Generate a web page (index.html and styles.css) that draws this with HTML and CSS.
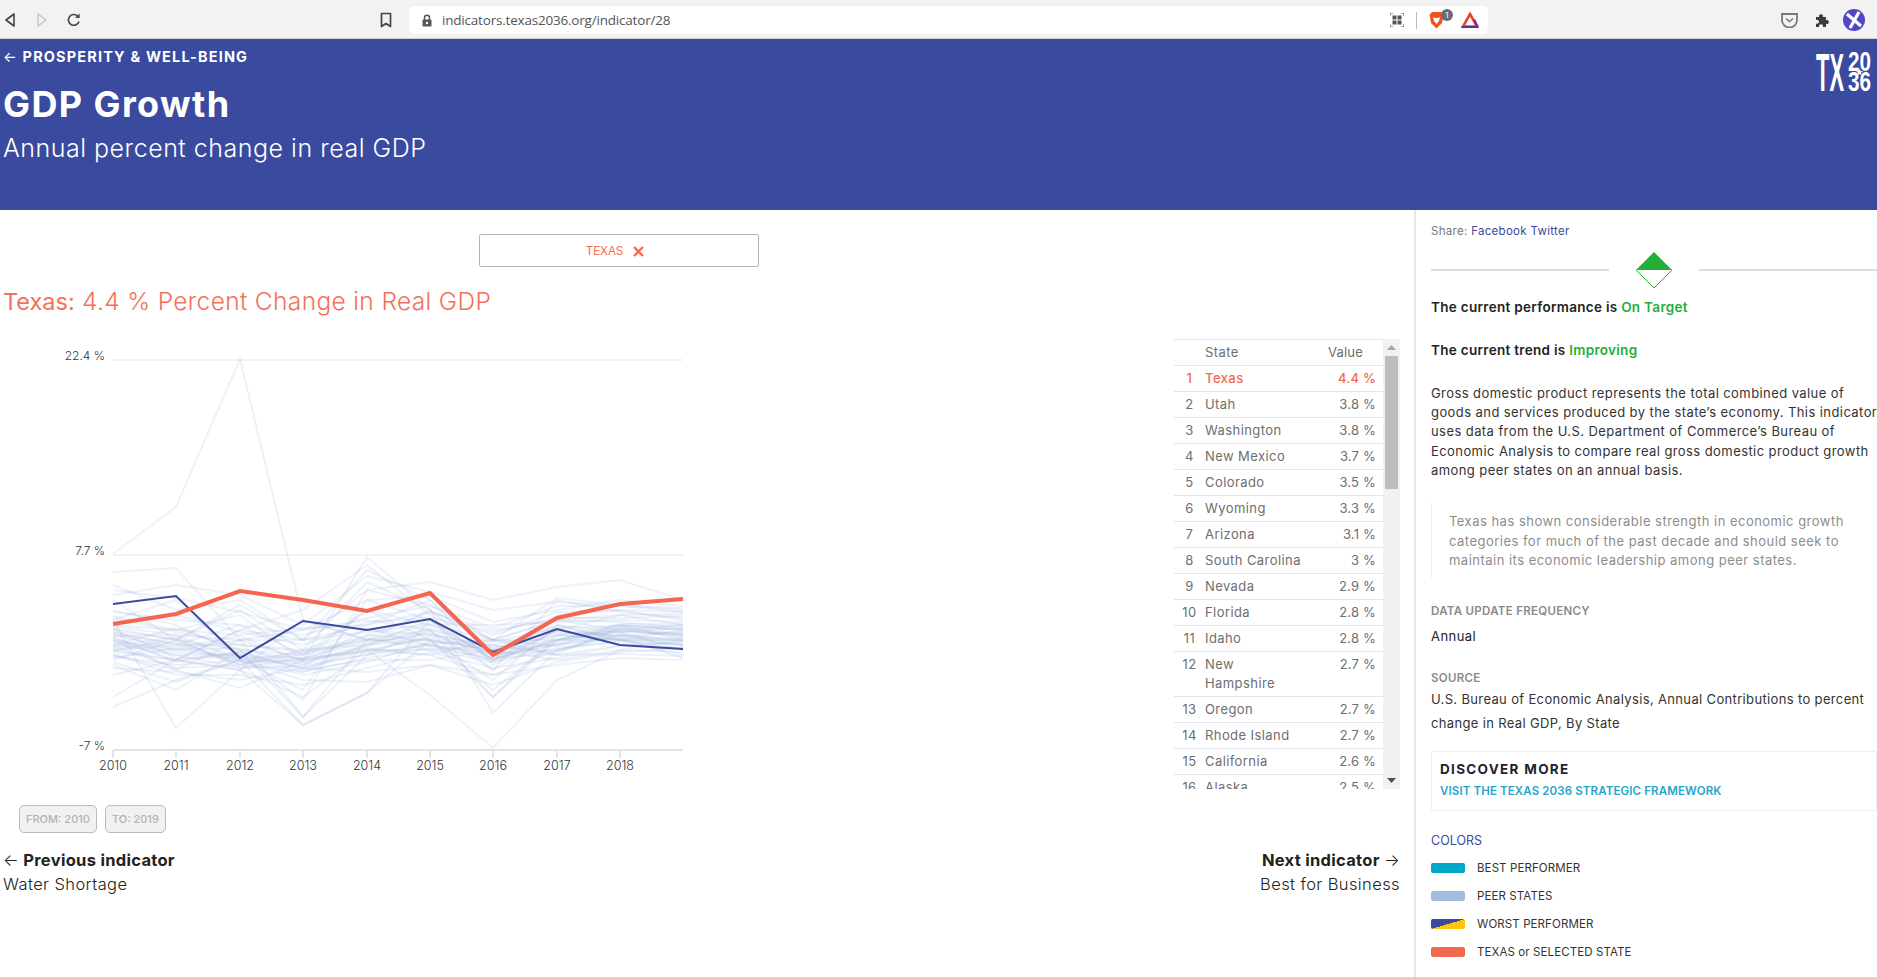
FILE: index.html
```html
<!DOCTYPE html>
<html lang="en">
<head>
<meta charset="utf-8">
<title>GDP Growth</title>
<link rel="stylesheet" href="styles.css">
</head>
<body>
<div class="chrome">
  <div class="nav-icons">
    <svg class="ic" width="12" height="16" viewBox="0 0 12 16"><path d="M10 2 2 8l8 6z" fill="none" stroke="#444" stroke-width="1.6" stroke-linejoin="round"/></svg>
    <svg class="ic fwd" width="12" height="16" viewBox="0 0 12 16"><path d="M2 2l8 6-8 6z" fill="none" stroke="#c4c4c4" stroke-width="1.4" stroke-linejoin="round"/></svg>
    <svg class="ic reload" width="16" height="16" viewBox="0 0 16 16"><path d="M13 9.5A5.4 5.4 0 1 1 11.6 4" fill="none" stroke="#444" stroke-width="1.6"/><path d="M13.6 1.5v4.6H9z" fill="#444"/></svg>
    <svg class="ic bookmark" width="12" height="16" viewBox="0 0 12 16"><path d="M1.5 1.5h9v13L6 11.5l-4.500 3z" fill="none" stroke="#444" stroke-width="1.7" stroke-linejoin="round"/></svg>
  </div>
  <div class="omnibox">
    <svg class="lock" width="10" height="13" viewBox="0 0 10 13"><path d="M2.500 6V3.800a2.500 2.500 0 0 1 5 0V6" fill="none" stroke="#555" stroke-width="1.500"/><rect x=".5" y="5.500" width="9" height="7" rx="1" fill="#555"/><circle cx="5" cy="9" r="1.200" fill="#fff"/></svg>
    <span class="url">indicators.texas2036.org/indicator/28</span>
    <span class="omni-right">
      <svg width="14" height="14" viewBox="0 0 14 14"><path d="M0 3V0h3M11 0h3v3M14 11v3h-3M3 14H0v-3" fill="none" stroke="#555"/><rect x="2.500" y="2.500" width="4" height="4" fill="#555"/><rect x="7.500" y="2.500" width="4" height="4" fill="#555"/><rect x="2.500" y="7.500" width="4" height="4" fill="#555"/><rect x="7.500" y="7.500" width="4" height="4" fill="#555"/></svg>
      <i class="sep"></i>
      <span class="brave">
        <svg width="15" height="18" viewBox="0 0 15 18"><path d="M3 1h9l2.500 3-1.500 8-5.500 5.500L2 12 .5 4z" fill="#f1531c"/><path d="M4 6l2 1h3l2-1-1 4-2.500 3L5 10z" fill="#fff"/></svg>
        <b class="badge">1</b>
      </span>
      <svg class="bat" width="18" height="16" viewBox="0 0 18 16"><path d="M9 2 16 14.500H2z" fill="none" stroke="#e8452c" stroke-width="2.600"/><path d="M0.500 15h17" stroke="#6c2a8a" stroke-width="2"/><path d="M13 7.500l3.500 7" stroke="#8a2a8a" stroke-width="2.400"/></svg>
    </span>
  </div>
  <div class="ext-icons">
    <svg class="ext-pocket" width="17" height="15" viewBox="0 0 17 15"><path d="M1 1h15v6a7.500 7.500 0 0 1-15 0z" fill="none" stroke="#777" stroke-width="1.800"/><path d="M5 5.500l3.500 3 3.500-3" fill="none" stroke="#777" stroke-width="1.600"/></svg>
    <svg class="ext-puzzle" width="15" height="15" viewBox="0 0 15 15"><path d="M1 4h3.200a2 2 0 1 1 3.600 0H11v3.200a2 2 0 1 1 0 3.600V14H7.800a2 2 0 1 0-3.600 0H1v-3.500a2 2 0 1 0 0-3.500z" fill="#3c3c3c"/></svg>
    <svg width="22" height="22" viewBox="0 0 22 22"><circle cx="11" cy="11" r="11" fill="#4f46c8"/><path d="M4 5l14 12M16 3 7 19" stroke="#fff" stroke-width="3.200"/></svg>
  </div>
</div>

<header class="hero">
  <div class="crumb"><span class="crumb-arrow">←</span> PROSPERITY &amp; WELL-BEING</div>
  <h1 class="hero-title">GDP Growth</h1>
  <p class="hero-sub">Annual percent change in real GDP</p>
  <svg class="logo" width="56" height="40" viewBox="0 0 56 40">
    <text class="logo-tx" x="0" y="39.500" textLength="28" lengthAdjust="spacingAndGlyphs">TX</text>
    <text class="logo-yr" x="32" y="19.500" textLength="23" lengthAdjust="spacingAndGlyphs">20</text>
    <text class="logo-yr" x="32" y="39.500" textLength="23" lengthAdjust="spacingAndGlyphs">36</text>
    <path class="logo-star" d="M43.500 17.500l1 2.500 2.500.2-2 1.600.7 2.500-2.200-1.400-2.200 1.400.7-2.500-2-1.600 2.500-.2z"/>
  </svg>
</header>

<main class="main">
  <section class="left">
    <div class="select-box"><span>TEXAS</span><svg width="11" height="11" viewBox="0 0 11 11"><path d="M1 1l9 9M10 1l-9 9" stroke="#f4694f" stroke-width="2.400"/></svg></div>
    <h2 class="chart-title"><span class="chart-title-state">Texas:</span> 4.4 % Percent Change in Real GDP</h2>

    <div class="chart-row">
      <svg class="chart" width="700" height="450" viewBox="0 339 700 450">
        <g class="grid">
          <path d="M113 360H683M113 555H683"/>
        </g>
        <path class="axis" d="M113 750H683M113 750v8M176 750v8M240 750v8M303 750v8M367 750v8M430 750v8M493 750v8M557 750v8M620 750v8"/>
        <g class="ylabels">
          <text x="105" y="360">22.4 %</text>
          <text x="105" y="555">7.7 %</text>
          <text x="105" y="750">-7 %</text>
        </g>
        <g class="xlabels">
          <text x="113" y="770">2010</text><text x="176" y="770">2011</text><text x="240" y="770">2012</text><text x="303" y="770">2013</text><text x="367" y="770">2014</text><text x="430" y="770">2015</text><text x="493" y="770">2016</text><text x="557" y="770">2017</text><text x="620" y="770">2018</text>
        </g>
        <g class="peers">
          <polyline points="113,554 176,507 240,359 303,620 367,640 430,640 493,650 557,640 620,625 683,640"/>
          <polyline points="113,572 176,568 240,640 303,660 367,557 430,610 493,640 557,620 620,630 683,625"/>
          <polyline points="113,585 176,610 240,600 303,640 367,570 430,600 493,650 557,625 620,640 683,630"/>
          <polyline points="113,600 176,640 240,610 303,650 367,582 430,610 493,660 557,615 620,610 683,620"/>
          <polyline points="113,610 176,625 240,654 303,700 367,590 430,582 493,600 557,587 620,580 683,600"/>
          <polyline points="113,620 176,600 240,660 303,690 367,600 430,620 493,670 557,600 620,612 683,618"/>
          <polyline points="113,625 176,630 240,615 303,660 367,610 430,640 493,690 557,640 620,630 683,635"/>
          <polyline points="113,630 176,640 240,605 303,640 367,590 430,605 493,640 557,598 620,605 683,610"/>
          <polyline points="113,635 176,650 240,640 303,717 367,640 430,610 493,713 557,650 620,635 683,640"/>
          <polyline points="113,640 176,660 240,630 303,640 367,625 430,600 493,665 557,630 620,640 683,645"/>
          <polyline points="113,645 176,628 240,650 303,660 367,635 430,640 493,680 557,625 620,632 683,650"/>
          <polyline points="113,650 176,645 240,625 303,655 367,610 430,625 493,655 557,645 620,625 683,630"/>
          <polyline points="113,655 176,670 240,640 303,630 367,620 430,630 493,670 557,635 620,640 683,640"/>
          <polyline points="113,660 176,640 240,665 303,650 367,645 430,620 493,660 557,640 620,628 683,635"/>
          <polyline points="113,640 176,670 240,688 303,660 367,650 430,655 493,675 557,650 620,635 683,645"/>
          <polyline points="113,650 176,660 240,670 303,697 367,650 430,695 493,748 557,680 620,650 683,640"/>
          <polyline points="113,697 176,660 240,670 303,725 367,693 430,640 493,697 557,640 620,640 683,650"/>
          <polyline points="113,707 176,680 240,660 303,725 367,693 430,620 493,660 557,630 620,615 683,625"/>
          <polyline points="113,620 176,728 240,670 303,620 367,640 430,645 493,660 557,640 620,625 683,630"/>
          <polyline points="113,665 176,690 240,650 303,717 367,655 430,630 493,697 557,635 620,640 683,655"/>
          <polyline points="113,628 176,640 240,650 303,655 367,640 430,625 493,640 557,640 620,632 683,628"/>
          <polyline points="113,632 176,645 240,645 303,650 367,630 430,635 493,645 557,632 620,636 683,632"/>
          <polyline points="113,636 176,635 240,658 303,662 367,645 430,640 493,650 557,645 620,630 683,636"/>
          <polyline points="113,640 176,650 240,648 303,665 367,655 430,645 493,655 557,650 620,640 683,640"/>
          <polyline points="113,644 176,655 240,655 303,668 367,650 430,650 493,662 557,648 620,642 683,644"/>
          <polyline points="113,648 176,642 240,662 303,660 367,648 430,655 493,640 557,655 620,645 683,648"/>
          <polyline points="113,652 176,660 240,652 303,670 367,660 430,660 493,650 557,660 620,650 683,652"/>
          <polyline points="113,656 176,665 240,660 303,675 367,662 430,642 493,645 557,655 620,654 683,656"/>
          <polyline points="113,612 176,620 240,625 303,635 367,618 430,606 493,628 557,606 620,606 683,608"/>
          <polyline points="113,616 176,630 240,635 303,628 367,625 430,612 493,635 557,612 620,610 683,612"/>
          <polyline points="113,622 176,615 240,632 303,645 367,622 430,618 493,632 557,618 620,618 683,616"/>
          <polyline points="113,626 176,635 240,640 303,640 367,632 430,624 493,625 557,622 620,620 683,622"/>
          <polyline points="113,634 176,648 240,660 303,652 367,640 430,630 493,642 557,628 620,626 683,626"/>
          <polyline points="113,638 176,655 240,668 303,658 367,652 430,636 493,652 557,634 620,632 683,634"/>
          <polyline points="113,646 176,668 240,665 303,672 367,658 430,648 493,658 557,644 620,638 683,638"/>
          <polyline points="113,654 176,675 240,675 303,685 367,668 430,652 493,668 557,658 620,646 683,642"/>
          <polyline points="113,662 176,682 240,660 303,680 367,682 430,665 493,685 557,662 620,652 683,648"/>
          <polyline points="113,668 176,672 240,680 303,668 367,672 430,665 493,675 557,665 620,658 683,660"/>
          <polyline points="113,590 176,598 240,612 303,630 367,600 430,596 493,622 557,610 620,600 683,606"/>
          <polyline points="113,595 176,585 240,595 303,625 367,576 430,592 493,610 557,602 620,606 683,612"/>
          <polyline points="113,675 176,660 240,630 303,610 367,565 430,615 493,640 557,620 620,622 683,628"/>
          <polyline points="113,618 176,632 240,645 303,652 367,636 430,612 493,630 557,620 620,615 683,614"/>
          <polyline points="113,642 176,652 240,656 303,658 367,642 430,634 493,648 557,636 620,624 683,624"/>
          <polyline points="113,646 176,637 240,660 303,664 367,646 430,628 493,655 557,642 620,628 683,633"/>
          <polyline points="113,637 176,662 240,652 303,668 367,654 430,644 493,640 557,646 620,634 683,642"/>
          <polyline points="113,633 176,644 240,664 303,654 367,638 430,650 493,646 557,652 620,630 683,637"/>
          <polyline points="113,658 176,648 240,636 303,662 367,650 430,638 493,662 557,630 620,636 683,646"/>
          <polyline points="113,629 176,658 240,657 303,672 367,644 430,632 493,658 557,654 620,627 683,629"/>
          <polyline points="113,651 176,638 240,668 303,666 367,628 430,646 493,652 557,626 620,638 683,658"/>
        </g>
        <polyline class="worst" points="113,604 176,596 240,658 303,621 367,630 430,619 493,652 557,629 620,645 683,649"/>
        <polyline class="texas" points="113,624 176,614 240,591 303,600 367,611 430,593 493,655 557,618 620,604 683,599"/>
      </svg>

      <div class="table-wrap">
        <div class="table-clip">
          <table class="rank">
            <thead><tr><th></th><th class="th-state">State</th><th class="th-value">Value</th></tr></thead>
            <tbody>
              <tr class="hl"><td>1</td><td>Texas</td><td>4.4 %</td></tr>
              <tr><td>2</td><td>Utah</td><td>3.8 %</td></tr>
              <tr><td>3</td><td>Washington</td><td>3.8 %</td></tr>
              <tr><td>4</td><td>New Mexico</td><td>3.7 %</td></tr>
              <tr><td>5</td><td>Colorado</td><td>3.5 %</td></tr>
              <tr><td>6</td><td>Wyoming</td><td>3.3 %</td></tr>
              <tr><td>7</td><td>Arizona</td><td>3.1 %</td></tr>
              <tr><td>8</td><td>South Carolina</td><td>3 %</td></tr>
              <tr><td>9</td><td>Nevada</td><td>2.9 %</td></tr>
              <tr><td>10</td><td>Florida</td><td>2.8 %</td></tr>
              <tr><td>11</td><td>Idaho</td><td>2.8 %</td></tr>
              <tr><td>12</td><td>New<br>Hampshire</td><td>2.7 %</td></tr>
              <tr><td>13</td><td>Oregon</td><td>2.7 %</td></tr>
              <tr><td>14</td><td>Rhode Island</td><td>2.7 %</td></tr>
              <tr><td>15</td><td>California</td><td>2.6 %</td></tr>
              <tr><td>16</td><td>Alaska</td><td>2.5 %</td></tr>
            </tbody>
          </table>
        </div>
        <div class="scrollbar">
          <svg width="9" height="5" viewBox="0 0 9 5" class="sb-up"><path d="M4.500 0 9 5H0z" fill="#a8a8a8"/></svg>
          <div class="thumb"></div>
          <svg width="9" height="5" viewBox="0 0 9 5" class="sb-down"><path d="M0 0h9L4.500 5z" fill="#505050"/></svg>
        </div>
      </div>
    </div>

    <div class="range">
      <span class="range-btn">FROM: 2010</span>
      <span class="range-btn">TO: 2019</span>
    </div>

    <nav class="pager">
      <div>
        <div class="pager-head"><span class="pager-arrow">←</span> Previous indicator</div>
        <div class="pager-name">Water Shortage</div>
      </div>
      <div class="pager-next">
        <div class="pager-head">Next indicator <span class="pager-arrow">→</span></div>
        <div class="pager-name">Best for Business</div>
      </div>
    </nav>
  </section>

  <aside class="side">
    <div class="share">Share: <a>Facebook</a> <a>Twitter</a></div>
    <div class="status">
      <i class="rule"></i>
      <svg width="38" height="38" viewBox="0 0 38 38"><path d="M19 1 37 19H1z" fill="#22b03a"/><path d="M1 19 19 37 37 19" fill="#fff" stroke="#22b03a" stroke-width="1"/></svg>
      <i class="rule"></i>
    </div>
    <p class="verdict">The current performance is <span class="good">On Target</span></p>
    <p class="verdict trend">The current trend is <span class="good">Improving</span></p>
    <p class="desc">Gross domestic product represents the total combined value of<br>goods and services produced by the state’s economy. This indicator<br>uses data from the U.S. Department of Commerce’s Bureau of<br>Economic Analysis to compare real gross domestic product growth<br>among peer states on an annual basis.</p>
    <blockquote class="quote">Texas has shown considerable strength in economic growth<br>categories for much of the past decade and should seek to<br>maintain its economic leadership among peer states.</blockquote>
    <div class="meta-label freq">DATA UPDATE FREQUENCY</div>
    <div class="meta-value">Annual</div>
    <div class="meta-label src">SOURCE</div>
    <div class="meta-source">U.S. Bureau of Economic Analysis, Annual Contributions to percent<br>change in Real GDP, By State</div>
    <div class="discover">
      <div class="discover-head">DISCOVER MORE</div>
      <a class="discover-link">VISIT THE TEXAS 2036 STRATEGIC FRAMEWORK</a>
    </div>
    <div class="colors-head">COLORS</div>
    <ul class="legend">
      <li><i class="sw sw-best"></i>BEST PERFORMER</li>
      <li><i class="sw sw-peer"></i>PEER STATES</li>
      <li><i class="sw sw-worst"></i>WORST PERFORMER</li>
      <li><i class="sw sw-texas"></i>TEXAS or SELECTED STATE</li>
    </ul>
  </aside>
</main>
</body>
</html>
```
FILE: styles.css
```css
* { box-sizing: border-box; }
html, body { margin: 0; height: 977px; overflow: hidden; background: #fff; }
body { font-family: Inter, "Open Sans", sans-serif; color: #222; }

/* browser chrome */
.chrome { height: 39px; padding-top: 2px; background: #f2f2f2; border-bottom: 1px solid #d0d0d0; display: flex; align-items: center; }
.nav-icons { display: flex; align-items: center; width: 409px; padding-left: 4px; }
.ic { flex: none; }
.fwd { margin-left: 20px; }
.reload { margin-left: 18px; }
.bookmark { margin-left: 298px; }
.omnibox { width: 1079px; height: 28px; background: #fff; border-radius: 5px; display: flex; align-items: center; padding-left: 13px; }
.lock { flex: none; }
.url { margin-left: 10px; font: 13.5px "Open Sans", sans-serif; color: #555; letter-spacing: -.2px; }
.omni-right { margin-left: auto; display: flex; align-items: center; padding-right: 9px; }
.sep { width: 1px; height: 17px; background: #bbb; margin: 0 12px 0 12px; }
.brave { display: flex; width: 32px; align-items: flex-start; }
.badge { width: 12px; height: 12px; border-radius: 50%; background: #686b78; color: #fff; font: 400 8px/12px Inter, sans-serif; text-align: center; margin-left: -3px; margin-top: -2px; }
.ext-icons { flex: 1; display: flex; align-items: center; justify-content: flex-end; padding-right: 12px; }
.ext-pocket { margin-right: 17px; }
.ext-puzzle { margin-right: 13px; }

/* hero */
.hero { position: relative; height: 171px; background: #3a4a9e; color: #fff; padding: 9px 3px 0; }
.crumb { font-size: 14.5px; line-height: 18px; font-weight: 700; letter-spacing: 1.15px; }
.crumb-arrow { font-weight: 400; }
.hero-title { margin: 16px 0 0; font-size: 36px; line-height: 44px; font-weight: 700; letter-spacing: 1.4px; }
.hero-sub { margin: 6px 0 0; font-size: 25px; line-height: 32px; font-weight: 300; letter-spacing: .5px; }
.logo { position: absolute; right: 5px; top: 12px; overflow: visible; }
.logo-tx { font: 700 54px "Liberation Sans", sans-serif; fill: #fff; }
.logo-yr { font: 700 27px "Liberation Sans", sans-serif; fill: #fff; }
.logo-star { fill: #fff; }

/* main */
.main { display: flex; height: 767px; }
.left { width: 1416px; border-right: 2px solid #e6e6e6; padding-top: 24px; }
.select-box { margin-left: 479px; width: 280px; height: 33px; border: 1px solid #b5b5b5; border-radius: 2px; display: flex; align-items: center; justify-content: center; gap: 10px; padding: 1px 8px 0 0; color: #f4694f; font-size: 11.5px; }
.chart-title { margin: 18px 0 0 3px; font-size: 24.5px; line-height: 32px; font-weight: 300; color: #f4705a; letter-spacing: .35px; }
.chart-title-state { font-weight: 400; font-size: 23.5px; letter-spacing: 0; }
.chart-row { display: flex; justify-content: space-between; padding-right: 14px; margin-top: 21px; }
.chart { display: block; flex: none; }
.grid path { fill: none; stroke: #f3f3f3; stroke-width: 2; }
.axis { fill: none; stroke: #e4e4e4; stroke-width: 2; }
.ylabels text { font-size: 12px; font-weight: 300; fill: #333; text-anchor: end; }
.xlabels text { font-size: 12.5px; font-weight: 300; fill: #333; text-anchor: middle; }
.peers polyline { fill: none; stroke: #a3bbdf; stroke-width: 2; stroke-opacity: .2; }
.worst { fill: none; stroke: #3a4a9e; stroke-width: 2; }
.texas { fill: none; stroke: #f4664f; stroke-width: 4; }

.table-wrap { width: 226px; height: 450px; display: flex; }
.table-clip { width: 209px; height: 450px; overflow: hidden; }
.rank { width: 209px; border-collapse: collapse; table-layout: fixed; font-size: 13px; color: #6e6e6e; }
.rank thead tr { border-top: 1px solid #e4e4ea; }
.rank tr { border-bottom: 1px solid #e4e4ea; }
.rank th, .rank td { padding: 3px 0; line-height: 19px; vertical-align: top; font-weight: 400; text-align: left; letter-spacing: .42px; }
.rank th:first-child, .rank td:first-child { width: 31px; text-align: center; }
.rank th:nth-child(3), .rank td:nth-child(3) { width: 58px; text-align: right; padding-right: 7px; letter-spacing: .2px; }
.rank th.th-value { padding-right: 20px; }
.rank .hl td { color: #f4694f; font-weight: 500; }
.scrollbar { width: 17px; margin-left: 0; background: #f1f1f1; display: flex; flex-direction: column; align-items: center; }
.sb-up { margin-top: 6px; flex: none; }
.thumb { width: 13px; height: 133px; background: #bdbdbd; margin-top: 6px; flex: none; }
.sb-down { margin-top: auto; margin-bottom: 6px; flex: none; }

.range { display: flex; gap: 8px; margin: 16px 0 0 19px; }
.range-btn { height: 28px; line-height: 26px; padding: 0 6px; border: 1px solid #bbb; border-radius: 5px; background: #f1f1f1; color: #b3b3b3; font-size: 11px; font-weight: 500; }
.pager { display: flex; justify-content: space-between; padding: 15px 14px 0 3px; }
.pager-head { font-size: 16.5px; line-height: 24px; font-weight: 700; letter-spacing: .3px; }
.pager-arrow { font-weight: 300; }
.pager-name { font-size: 16.5px; line-height: 24px; font-weight: 300; letter-spacing: .4px; }
.pager-next { text-align: right; }

/* sidebar */
.side { flex: 1; padding: 11px 0 0 15px; font-size: 13px; min-width: 0; white-space: nowrap; }
.share { font-size: 11.5px; line-height: 20px; color: #777; letter-spacing: .3px; }
.share a { color: #3a4a9e; }
.status { display: flex; align-items: center; margin-top: 10px; justify-content: space-between; }
.rule { width: 178px; height: 2px; background: #dcdcdc; }
.status svg { display: block; margin: 0 26px; }
.verdict { margin: 9px 0 0; line-height: 19px; font-weight: 600; letter-spacing: .3px; font-size: 13.5px; }
.trend { margin-top: 24px; }
.good { color: #22b03a; }
.desc { margin: 24px 0 0; line-height: 19.2px; color: #333; letter-spacing: .42px; }
.quote { margin: 23px 0 0; padding: 9px 0 7px 17px; border-left: 1px solid #eee; line-height: 19.6px; color: #8d8d8d; letter-spacing: .48px; font-size: 13px; }
.meta-label { font-size: 11.5px; line-height: 16px; font-weight: 600; color: #8a8a8a; letter-spacing: .3px; }
.freq { margin-top: 25px; }
.meta-value { margin-top: 7px; line-height: 20px; font-size: 13px; color: #222; letter-spacing: .45px; }
.src { margin-top: 24px; }
.meta-source { margin-top: 1px; line-height: 24px; color: #333; letter-spacing: .35px; }
.discover { margin-top: 16px; height: 60px; border: 1px solid #eee; border-radius: 2px; padding: 7px 8px; }
.discover-head { font-size: 13.5px; line-height: 20px; font-weight: 700; letter-spacing: 1.3px; color: #1f1f2e; }
.discover-link { display: block; margin-top: 4px; font-size: 11.5px; line-height: 16px; font-weight: 600; color: #27a5c9; letter-spacing: .13px; }
.colors-head { margin-top: 20px; font-size: 12.5px; line-height: 20px; color: #3a4a9e; }
.legend { list-style: none; margin: 3px 0 0; padding: 0; }
.legend li { display: flex; align-items: center; height: 28px; font-size: 11.5px; font-weight: 400; color: #333; letter-spacing: .1px; }
.sw { width: 34px; height: 10px; border-radius: 2px; margin-right: 12px; flex: none; }
.sw-best { background: #00a9c7; }
.sw-peer { background: #a3bbdf; }
.sw-worst { background: linear-gradient(to bottom right, #3a4a9e 50%, #fec70a 50%); }
.sw-texas { background: #f4684f; }
```
